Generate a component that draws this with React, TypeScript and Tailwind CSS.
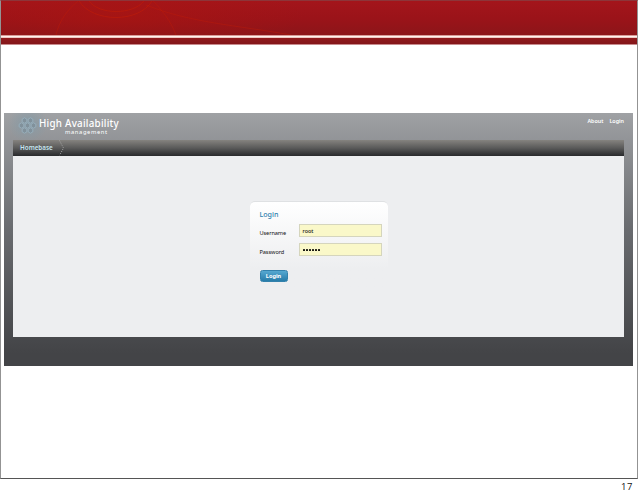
import React from "react";

function HexLogo() {
  const cells: [number, number][] = [
    [5, 3], [11, 3], [2, 8], [8, 8], [14, 8], [5, 13], [11, 13],
  ];
  return (
    <svg className="mt-[4px] h-[17px] w-[19px] shrink-0" viewBox="0 -0.5 16 17" fill="none">
      {cells.map(([x, y]) => (
        <path
          key={`${x}-${y}`}
          d={`M${x} ${y - 2.7}l2.3 1.35v2.7l-2.3 1.35l-2.3-1.35v-2.7z`}
          fill="#81919b"
          stroke="#9db7c5"
          strokeWidth="0.7"
        />
      ))}
    </svg>
  );
}

function Banner() {
  return (
    <header className="flex h-[45px] shrink-0 flex-col">
      <div className="h-[34px] overflow-hidden bg-linear-to-b from-[#a3151b] via-[#9b1319] to-[#8c1519]">
        <svg className="block h-[34px] w-full" viewBox="0 0 636 34" fill="none">
          <defs>
            <radialGradient id="glow">
              <stop offset="0" stopColor="#ab1510" stopOpacity="0.6" />
              <stop offset="1" stopColor="#a91510" stopOpacity="0" />
            </radialGradient>
          </defs>
          <ellipse cx="115" cy="14" rx="190" ry="36" fill="url(#glow)" />
          <g stroke="#c01c08" strokeOpacity="0.6">
            <path d="M88 0C98 14 132 14 143 0" />
            <path d="M78 0C92 22 138 22 151 0" />
            <path d="M55 34C58 20 67 8 77 0M175 34C170 20 160 8 152 0" strokeOpacity="0.4" />
            <path d="M145 4C190 22 235 24 290 34" strokeOpacity="0.4" />
          </g>
        </svg>
      </div>
      <div className="h-px bg-[#d99b98]" />
      <div className="h-px bg-[#fff2ed]" />
      <div className="h-px bg-[#efc9c4]" />
      <div className="h-[6px] bg-linear-to-b from-[#901a1d] to-[#84161a]" />
      <div className="h-px bg-[#c78b8d]" />
    </header>
  );
}

function Field({ label, children }: { label: string; children: React.ReactNode }) {
  return (
    <div className="flex h-[13px]">
      <span className="w-[39px] shrink-0 pt-[5px] text-[5.6px] leading-[8px] tracking-[-0.08px] text-[#111]">{label}</span>
      <div className="flex h-[13px] w-[83px] shrink-0 items-center border border-[#d5d5bd] bg-[#faf8c9] pl-[3px] text-[5.4px] leading-[9px] font-medium text-[#111]">
        {children}
      </div>
    </div>
  );
}

function LoginCard() {
  return (
    <div className="ml-[237px] h-[90px] w-[138px] rounded-[5px] border-t border-[#dfe1e3] bg-linear-to-b from-white to-[#edeef0] to-75% pl-[9.5px]">
      <h2 className="mt-[7px] h-[15px] text-[7.1px] leading-[10px] font-medium text-[#2f7fae]">Login</h2>
      <div className="flex flex-col gap-[6px]">
        <Field label="Username"><span className="pt-px">root</span></Field>
        <Field label="Password">
          <span className="flex gap-[1px]">
            {[0, 1, 2, 3, 4, 5].map((n) => (
              <i key={n} className="size-[2px] rounded-[0.5px] bg-[#171711]" />
            ))}
          </span>
        </Field>
      </div>
      <button className="mt-[14px] block h-[12px] w-[28px] rounded-[2.5px] border border-[#3381ac] bg-linear-to-b from-[#55a8d1] to-[#277ca9] text-center text-[5.6px] leading-[9px] font-bold text-white">
        Login
      </button>
    </div>
  );
}

export default function App() {
  return (
    <div className="flex h-[495px] w-[638px] flex-col bg-white font-['Noto_Sans','Open_Sans',sans-serif]">
      <div className="flex h-[479px] flex-col border-x border-t border-b border-x-[#939393] border-t-[#8d3539] border-b-[#555]">
        <Banner />
        <main className="mt-[67px] ml-[3px] flex h-[253px] w-[629px] flex-col bg-linear-to-b from-[#9fa1a4] via-[#6a6c70] via-45% to-[#434447] to-95% px-[9px]">
          <div className="-ml-[9px] flex h-[27px] justify-between bg-[radial-gradient(ellipse_20px_18px_at_24px_11px,#869aa5,transparent)] pl-[14px]">
            <div className="flex">
              <HexLogo />
              <div className="ml-[2px] pt-[5px] text-white">
                <div className="h-[11px] text-[9.8px] leading-[11px] font-medium tracking-[0.25px] whitespace-nowrap">High Availability</div>
                <div className="ml-[26px] text-[5.8px] leading-[6px] tracking-[0.6px] whitespace-nowrap">management</div>
              </div>
            </div>
            <nav className="flex gap-[6px] pt-[4px] text-[5.4px] leading-[9px] font-semibold text-white">
              <span>About</span>
              <span>Login</span>
            </nav>
          </div>
          <nav className="flex h-[16px] shrink-0 bg-linear-to-b from-[#85837f] via-[#5a5a5a] to-[#292a2c] pl-[7px]">
            <span className="w-[39px] text-[6.3px] leading-[16px] font-semibold text-[#c7e7f2]">Homebase</span>
            <svg className="h-[16px] w-[6px]" viewBox="0 0 6 16" fill="none">
              <path d="M0.5 0.5L4.5 8L0.5 15.5" stroke="#a8a8a8" strokeDasharray="1 1.4" />
            </svg>
          </nav>
          <section className="h-[181px] bg-[#edeef0] pt-[45px]">
            <LoginCard />
          </section>
        </main>
      </div>
      <footer className="flex h-[16px] justify-end pr-[5px] font-['Open_Sans','Noto_Sans',sans-serif] text-[9.5px] leading-[15px] font-medium tracking-[0.6px] text-[#111]">17</footer>
    </div>
  );
}
